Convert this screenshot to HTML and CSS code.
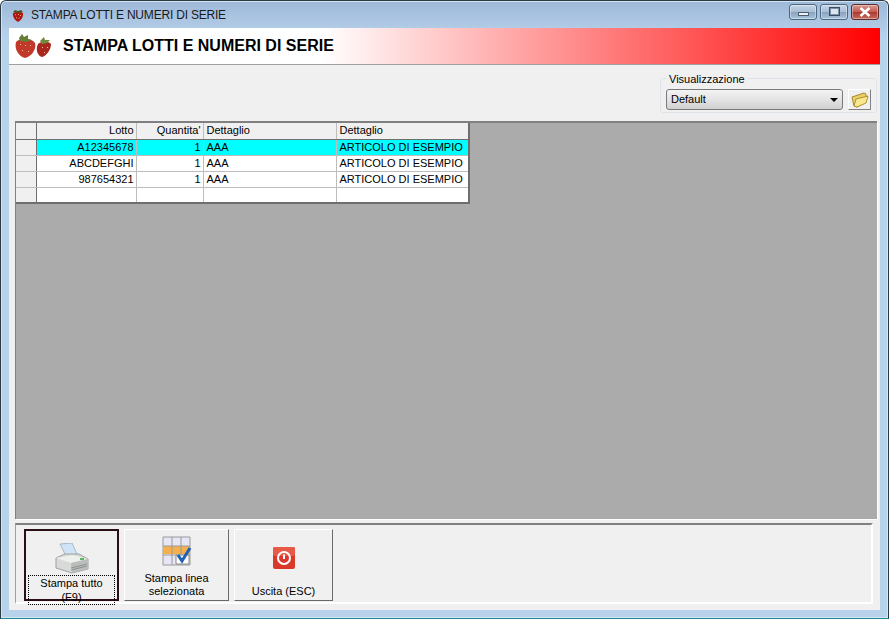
FILE: index.html
```html
<!DOCTYPE html>
<html lang="en">

<head>
    <meta charset="UTF-8">
    <title>Stampa lotti e numeri di serie</title>
    <link rel="stylesheet" href="styles.css">
</head>

<body>
    <div class="window">
        <div class="titlebar">
            <svg class="title-icon" width="16" height="16" viewBox="0 0 16 16">
                <path d="M8 15C5 13.500 2.500 10 3 6.500 4 4 12 4 13 6.500 13.500 10 11 13.500 8 15Z" fill="#b01518" />
                <path d="M3 5 5 3 8 4 11 3 13 5 10 6 8 5 6 6Z" fill="#4a5a24" />
                <path d="M5 7.500 6 8M8 7l1 1M11 8l-1 1M6 10.500l1 .5M9.500 11l-1 .5" stroke="#e8b060" stroke-width="1" />
            </svg>
            <span class="title-text">STAMPA LOTTI E NUMERI DI SERIE</span>
            <div class="caption-buttons">
                <div class="cap-btn cap-min"><span></span></div>
                <div class="cap-btn cap-max"><span></span></div>
                <div class="cap-btn cap-close">
                    <svg width="14" height="10" viewBox="0 0 14 10">
                        <path d="M2.500 1 11.500 9M11.500 1 2.500 9" stroke="#fff" stroke-width="2.600" />
                    </svg>
                </div>
            </div>
        </div>

        <div class="client">
            <div class="banner">
                <svg class="banner-logo" width="38" height="26" viewBox="0 0 38 26">
                    <path d="M24 11C27 8 35 8 37 11 37 17 32 23 28 24 24 23 21 17 24 11Z" fill="#a8281f" />
                    <path d="M26 8 30 4 31 7 36 7 33 10 28 11Z" fill="#6f8a3a" />
                    <path d="M2 9C5 5 18 5 21 10 23 16 17 24 11 25 5 24 0 16 2 9Z" fill="#c0392b" />
                    <path d="M5 5 8 1 10 4 14 2 14 6 18 7 12 9 6 8Z" fill="#667f35" />
                    <path d="M6 11 7 12M11 12l1 1M16 12l1 1M8 17l1 1M14 18l1 1M28 14l1 1M33 14l1 1M30 19l1 1" stroke="#eec08a" stroke-width="1" />
                </svg>
                <span class="banner-title">STAMPA LOTTI E NUMERI DI SERIE</span>
            </div>

            <div class="view-row">
                <div class="view-box">
                    <span class="view-legend">Visualizzazione</span>
                    <div class="view-combo">
                        <span>Default</span>
                        <i class="combo-arrow"></i>
                    </div>
                    <div class="folder-btn">
                        <svg width="18" height="16" viewBox="0 0 18 16">
                            <path d="M1 5 7 3 13 1 15 2 15 10 6 15 3 14Z" fill="#e9cf6a" stroke="#a88a2c" stroke-width="1" />
                            <path d="M5 7 17 4 15 11 6 15 3 14Z" fill="#f8e88e" stroke="#b0922f" stroke-width="1" />
                        </svg>
                    </div>
                </div>
            </div>

            <div class="grid-panel">
                <table class="grid">
                    <colgroup>
                        <col class="col-head">
                        <col class="col-lotto">
                        <col class="col-qty">
                        <col class="col-det">
                        <col class="col-det">
                    </colgroup>
                    <tr class="row-header">
                        <th></th>
                        <th class="num">Lotto</th>
                        <th class="num">Quantita'</th>
                        <th>Dettaglio</th>
                        <th>Dettaglio</th>
                    </tr>
                    <tr class="row-selected">
                        <th></th>
                        <td class="num">A12345678</td>
                        <td class="num">1</td>
                        <td>AAA</td>
                        <td>ARTICOLO DI ESEMPIO</td>
                    </tr>
                    <tr>
                        <th></th>
                        <td class="num">ABCDEFGHI</td>
                        <td class="num">1</td>
                        <td>AAA</td>
                        <td>ARTICOLO DI ESEMPIO</td>
                    </tr>
                    <tr>
                        <th></th>
                        <td class="num">987654321</td>
                        <td class="num">1</td>
                        <td>AAA</td>
                        <td>ARTICOLO DI ESEMPIO</td>
                    </tr>
                    <tr>
                        <th></th>
                        <td></td>
                        <td></td>
                        <td></td>
                        <td></td>
                    </tr>
                </table>
            </div>

            <div class="toolbar">
                <div class="tool-btn tool-print is-default">
                    <svg width="34" height="32" viewBox="0 0 34 32">
                        <path d="M5 1 17 0 22 11 11 13Z" fill="#cfe4f7" stroke="#a9b8c6" stroke-width="1" />
                        <path d="M1 15 10 11 24 11 33 16 33 26 17 30 1 25Z" fill="#d8dad8" stroke="#9ea2a0" stroke-width="1" />
                        <path d="M1 15 16 20 33 16 17 12Z" fill="#eef0ee" />
                        <path d="M16 20 33 16 33 26 17 30Z" fill="#b9bdbb" />
                        <path d="M16 25 32 21M16 27 32 23" stroke="#8d918f" stroke-width="1" />
                        <path d="M25 15h4v2h-4Z" fill="#5cb85c" />
                    </svg>
                    <span class="tool-label"><span class="focus-mark">Stampa tutto (F9)</span></span>
                </div>
                <div class="tool-btn tool-line">
                    <svg width="30" height="30" viewBox="0 0 30 30">
                        <path d="M1 1H28V29H1Z" fill="#e6e6f4" stroke="#9a9a9a" stroke-width="1" />
                        <path d="M1 10H28V18H1Z" fill="#f5b04c" />
                        <path d="M10 1V29M19 1V29M1 10H28M1 19H28" stroke="#9a9a9a" stroke-width="1" fill="none" />
                        <path d="M14 19H27V28H14Z" fill="#fff" stroke="#8a8a8a" stroke-width="1" />
                        <path d="M16 19 20 25 28 12" stroke="#1f5fb5" stroke-width="3" fill="none" />
                    </svg>
                    <span class="tool-label">Stampa linea<br>selezionata</span>
                </div>
                <div class="tool-btn tool-exit">
                    <svg width="24" height="24" viewBox="0 0 24 24">
                        <rect x="1" y="1" width="22" height="22" rx="2" fill="#d8392a" />
                        <rect x="1" y="1" width="22" height="9" rx="2" fill="#e85a48" />
                        <circle cx="12" cy="12" r="6" fill="none" stroke="#fff" stroke-width="2" />
                        <path d="M12 8.500V13" stroke="#fff" stroke-width="2" />
                    </svg>
                    <span class="tool-label">Uscita (ESC)</span>
                </div>
            </div>
        </div>
    </div>
</body>

</html>
```

FILE: styles.css
```css
* {
    box-sizing: border-box;
}

html,
body {
    margin: 0;
    height: 100%;
    overflow: hidden;
}

body {
    font-family: "Liberation Sans", Arial, sans-serif;
    font-size: 11px;
    color: #000;
    background-color: #fff;
}

.window {
    display: flex;
    flex-direction: column;
    width: 889px;
    height: 619px;
    padding: 0 8px 8px;
    background: linear-gradient(180deg, #9db9d8 0%, #b9d2ec 6%, #b9d2ec 100%);
    border: 1px solid #2c3a44;
    border-bottom-color: #1d8a96;
    border-radius: 6px 6px 0 0;
    box-shadow: inset 0 0 0 1px #d5e4f2;
}

/* title bar */

.titlebar {
    display: flex;
    align-items: center;
    flex: none;
    height: 27px;
    margin-left: 1px;
}

.title-icon {
    margin-right: 5px;
}

.title-text {
    font-size: 12px;
    color: #1a1a1a;
    letter-spacing: -0.2px;
}

.caption-buttons {
    display: flex;
    gap: 3px;
    margin-left: auto;
    margin-top: -6px;
    margin-right: 1px;
}

.cap-btn {
    display: flex;
    align-items: center;
    justify-content: center;
    width: 28px;
    height: 16px;
    border: 1px solid #4e6680;
    border-radius: 3px;
    background: linear-gradient(180deg, #c4d6e8 0%, #a8bdd4 50%, #88a2bf 51%, #a9c4dd 100%);
    box-shadow: inset 0 0 0 1px rgba(255, 255, 255, 0.4);
}

.cap-min span {
    display: block;
    width: 11px;
    height: 4px;
    margin-top: 4px;
    background: #eef2f6;
    border: 1px solid #4e5d6e;
}

.cap-max span {
    display: block;
    width: 11px;
    height: 9px;
    background: #dbe5ef;
    border: 1px solid #3c4c5e;
    box-shadow: inset 0 0 0 1px #7d91a8, inset 0 0 0 2px #dbe5ef;
}

.cap-close {
    width: 28px;
    border-color: #5c2a28;
    background: linear-gradient(180deg, #d89a92 0%, #c25a50 50%, #a93a30 51%, #c9695d 100%);
}

/* client area */

.client {
    display: flex;
    flex-direction: column;
    flex: 1;
    min-height: 0;
    background-color: #f0f0f0;
}

.banner {
    display: flex;
    align-items: center;
    flex: none;
    height: 37px;
    padding-left: 5px;
    background: linear-gradient(90deg, #fff 0%, #fff 36%, #f00 100%);
    border-bottom: 1px solid #a0a0a0;
}

.banner-logo {
    margin-right: 11px;
}

.banner-title {
    font-size: 16px;
    font-weight: bold;
}

.view-row {
    display: flex;
    justify-content: flex-end;
    flex: none;
    height: 56px;
    padding: 13px 3px 0 0;
}

.view-box {
    position: relative;
    display: flex;
    gap: 5px;
    width: 217px;
    height: 35px;
    padding: 10px 5px 0;
    border: 1px solid #dfe4ea;
    border-radius: 3px;
}

.view-legend {
    position: absolute;
    top: -6px;
    left: 6px;
    padding: 0 2px;
    font-size: 11px;
    line-height: 12px;
    background-color: #f0f0f0;
}

.view-combo {
    position: relative;
    width: 179px;
    height: 21px;
    padding-left: 4px;
    line-height: 19px;
    border: 1px solid #7a7a7a;
    border-radius: 3px;
    background: linear-gradient(180deg, #f3f3f3 0%, #e4e4e4 50%, #cfcfcf 100%);
}

.combo-arrow {
    position: absolute;
    top: 8px;
    right: 4px;
    border-top: 4px solid #000;
    border-left: 4px solid transparent;
    border-right: 4px solid transparent;
}

.folder-btn {
    display: flex;
    align-items: center;
    justify-content: center;
    width: 23px;
    height: 21px;
    border: 1px solid;
    border-color: #fff #808080 #808080 #fff;
    background-color: #f0f0f0;
}

/* grid */

.grid-panel {
    flex: 1;
    min-height: 0;
    margin: 0 3px 0 6px;
    background-color: #ababab;
    border-top: 2px solid #808080;
    border-left: 1px solid #808080;
    box-shadow: 1px 1px 0 #fff;
}

.grid {
    width: 454px;
    table-layout: fixed;
    border-collapse: collapse;
    background-color: #fff;
    border-right: 2px solid #6e6e6e;
    border-bottom: 2px solid #6e6e6e;
}

.col-head {
    width: 20px;
}

.col-lotto {
    width: 100px;
}

.col-qty {
    width: 67px;
}

.col-det {
    width: 133px;
}

.grid th,
.grid td {
    height: 16px;
    padding: 0 2px 0 3px;
    font-size: 11px;
    font-weight: normal;
    line-height: 13px;
    text-align: left;
    white-space: nowrap;
    overflow: hidden;
    border-right: 1px solid #bdbdbd;
    border-bottom: 1px solid #bdbdbd;
}

.grid th {
    background-color: #f0f0f0;
}

.grid tr > th:first-child {
    border-right: 1px solid #6e6e6e;
}

.row-header th {
    border-bottom: 1px solid #6e6e6e;
}

.row-selected td {
    background-color: #0ff;
}

.grid .num {
    text-align: right;
}

/* bottom buttons */

.toolbar {
    display: flex;
    gap: 5px;
    flex: none;
    height: 81px;
    margin: 4px 0 6px 6px;
    margin-right: 0;
    width: 858px;
    padding: 4px 0 0 8px;
    border-top: 2px solid #808080;
    border-right: 2px solid #fff;
    border-bottom: 2px solid #fff;
    border-left: 1px solid #a0a0a0;
}

.tool-btn {
    display: flex;
    flex-direction: column;
    align-items: center;
    height: 72px;
    border: 1px solid;
    border-color: #fff #696969 #696969 #fff;
    background-color: #f0f0f0;
    text-align: center;
}

.tool-btn svg {
    flex: none;
}

.tool-label {
    margin-top: auto;
    padding-bottom: 2px;
    line-height: 13px;
}

.tool-print {
    width: 95px;
    padding-top: 12px;
}

.is-default {
    border: 2px solid #2a0f14;
    padding: 12px 2px 1px;
}

.focus-mark {
    display: block;
    padding: 0 1px;
    border: 1px dotted #000;
    line-height: 14px;
}

.tool-line {
    width: 105px;
    padding-top: 6px;
}

.tool-exit {
    width: 99px;
    padding-top: 16px;
}
```
